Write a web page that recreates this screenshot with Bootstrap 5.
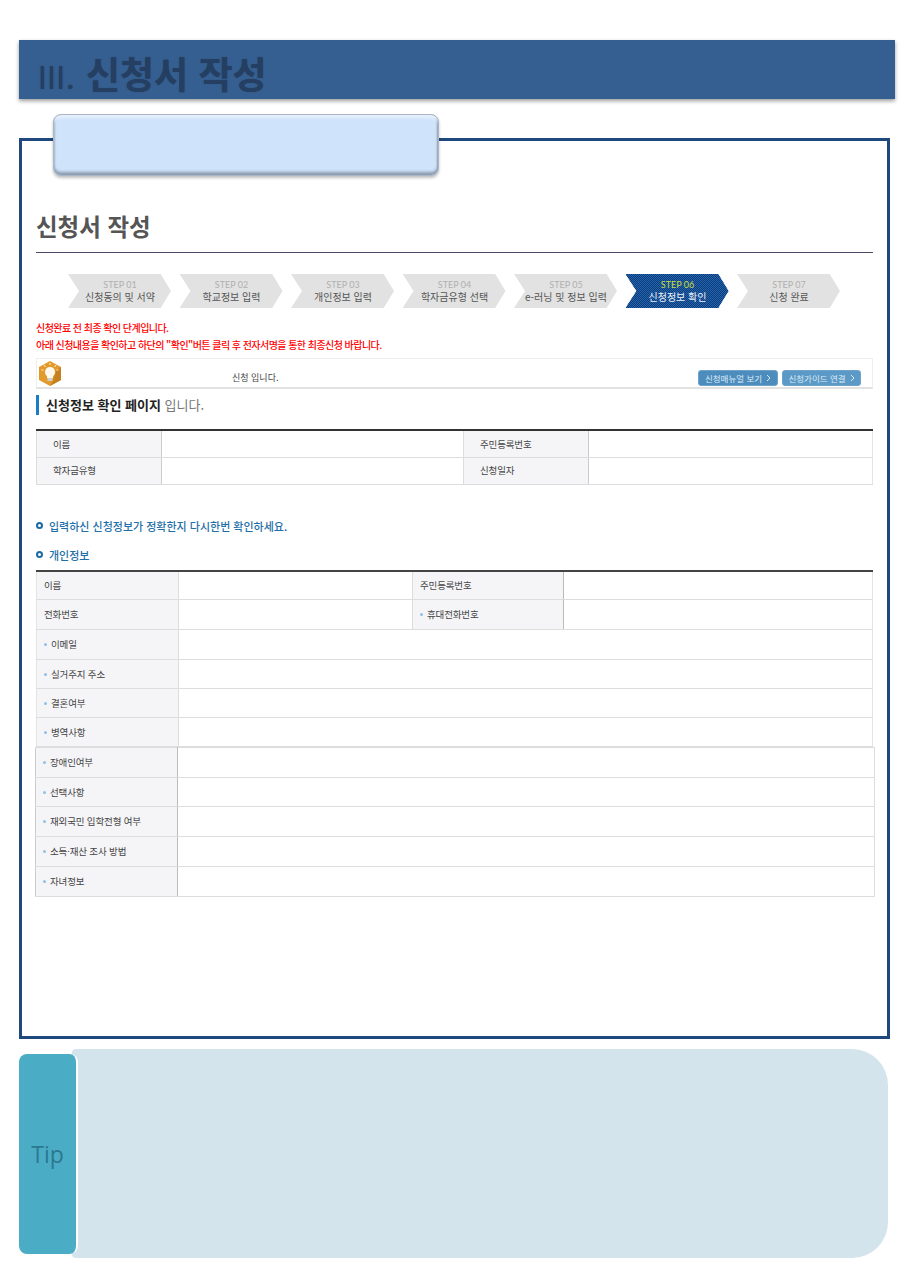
<!DOCTYPE html>
<html lang="ko">
<head>
<meta charset="utf-8">
<title>신청서 작성</title>
<link rel="stylesheet" href="https://cdn.jsdelivr.net/npm/bootstrap@5.3.0/dist/css/bootstrap.min.css">
<style>
html,body{background:#fff;}
body{font-family:"Noto Sans CJK KR","Liberation Sans",sans-serif;width:914px;height:1267px;overflow:hidden;padding:40px 19px 0;color:#333;}
.title-bar{width:876px;height:59px;background:#365f91;box-shadow:0 2px 4px rgba(0,0,0,.4);padding-left:17px;font-size:37px;font-weight:700;color:#243f61;line-height:66px;text-shadow:0 0 1px #243f61;white-space:nowrap;}
.title-bar .num{display:inline-block;width:50px;font-size:31px;font-weight:400;letter-spacing:-1px;}
.frame{position:relative;width:871px;height:901px;margin-top:39px;border:3px solid #1f497d;padding:0 14px;}
.pill{position:absolute;left:31px;top:-27px;width:386px;height:62px;border-radius:8px;background:#cfe3fb;border:1px solid #aab6c8;box-shadow:inset 0 5px 3px -2px #e6f0fb,inset 0 -4px 3px -1px #8c9cb0,inset 2px 0 2px -1px #a9bdd6,inset -2px 0 2px -1px #8c9cb0,0 2px 3px rgba(0,0,0,.25);}
.page-h{margin:0;height:112px;border-bottom:1px solid #4a4a68;padding-top:68px;font-size:23.5px;font-weight:700;line-height:34px;color:#555;}
.frame-in{width:837px;}
.steps{margin:21px 0 0 32px;gap:8.5px;}
.stp{width:103px;height:34px;background:#e2e2e2;clip-path:polygon(0 0,90% 0,100% 50%,90% 100%,0 100%,11px 50%);text-align:center;flex:none;color:#555;font-size:10px;line-height:13px;padding:5px 0 0 1px;white-space:nowrap;}
.stp small{display:block;font-size:9px;line-height:11px;color:#b0b0b0;font-family:"Lato","Liberation Sans",sans-serif;}
.stp.on{background-color:#1e66b8;background-image:conic-gradient(#123a70 25%,transparent 0 50%,#123a70 0 75%,transparent 0);background-size:2px 2px;color:#eef3f9;}
.stp.on small{color:#c7dc3c;}
.warn{margin:11px 0 0;color:#f00;font-size:10px;letter-spacing:-.55px;line-height:17px;font-weight:500;}
.notice{height:31px;margin-top:5px;border:1px solid #eee;border-bottom:2px solid #e2e2e2;position:relative;font-size:9px;color:#444;padding:11px 11px 0 0;}
.notice .hex{position:absolute;left:2px;top:2px;}
.notice .msg{position:absolute;left:195px;top:11px;line-height:15px;}
.blue-btn{height:16px;background:#4d8dbd;border:1px solid #6fa3c9;border-radius:3px;color:#dcebf6;font-size:8.5px;line-height:14px;white-space:nowrap;padding:0;display:flex;align-items:center;justify-content:center;gap:4px;}
.b1{width:80px;}
.b2{width:79px;background:#5b99c6;}
.sec-h{margin:6px 0 0;height:20px;border-left:3px solid #1b7dc7;padding-left:7px;font-size:13px;line-height:20px;font-weight:700;color:#222;}
.sec-h span{font-weight:400;color:#777;}
.tbl{table-layout:fixed;border-collapse:collapse;margin:0;font-size:9.5px;letter-spacing:-.15px;color:#444;}
.tbl th{background:#f5f5f8;font-weight:400;}
.tbl th,.tbl td{border:1px solid #ddd;padding:0;}
.tbl1{width:837px;margin-top:14px;border-top:2px solid #333;}
.tbl1 th{padding-left:16px;border-right-color:#ccc;}
.tbl1 tr{height:27px;}
.tbl1 tr:first-child th,.tbl1 tr:first-child td{border-top:0;}
.tbl1 td{border-left:0;}
.tbl1 th+td+th{border-left:0;}
.tbl1 td:last-child{border-right:1px solid #e4e4e4;}
.tbl1 .c1,.tbl1 .c3{width:125px;}
.tbl1 .c2{width:302px;}
.bul{margin:0;color:#1f6fa8;font-size:11px;line-height:16px;display:flex;align-items:center;gap:6px;font-weight:500;}
.bul i{width:7px;height:7px;border:2px solid #1c6aa3;border-radius:50%;flex:none;}
.bul1{margin-top:33px;}
.bul2{margin-top:13px;margin-bottom:7px;}
.tbl2{width:837px;border-top:2px solid #444;}
.tbl2 th{padding-left:7px;}
.tbl2 th:first-child{border-left:1px solid #e4e4e4;}
.tbl2 td:last-child{border-right:1px solid #e4e4e4;}
.tbl2 .c1{width:142px;}
.tbl2 .c2{width:234px;}
.tbl2 .c3{width:151px;}
.tbl2 th+td+th{border-left:1px solid #bbb;border-right:1px solid #bbb;}
.tbl3{width:840px;margin-left:-1px;}
.tbl3 .c1{width:142px;}
.tbl3 th{padding-left:7px;border-right:1px solid #bbb;border-left:1px solid #ccc;}
.tbl3 td{border-right:1px solid #ddd;}
.tbl3 tr{border-bottom:1px solid #ccc;}
.h29{height:29px;}.h30{height:30px;}
.dot{display:inline-block;width:3px;height:3px;border-radius:50%;background:#8fc1e8;margin-right:4px;vertical-align:2px;}
.tip{position:relative;width:869px;height:209px;margin-top:10px;}
.tip-bg{position:absolute;left:53px;top:0;width:816px;height:209px;background:#d3e4ec;border-radius:4px 36px 36px 4px;}
.tip-tab{position:absolute;left:0;top:5px;width:59px;height:200px;background:#4bacc6;border-right:2px solid #fff;border-radius:8px;display:flex;align-items:center;justify-content:center;font-family:"Open Sans",sans-serif;font-size:23px;color:#2c7890;}
</style>
</head>
<body>
<div class="title-bar"><span class="num">Ⅲ.</span>신청서 작성</div>
<div class="frame">
  <div class="pill"></div>
  <div class="frame-in">
    <h1 class="page-h">신청서 작성</h1>
    <div class="steps d-flex">
      <div class="stp"><small>STEP 01</small>신청동의 및 서약</div>
      <div class="stp"><small>STEP 02</small>학교정보 입력</div>
      <div class="stp"><small>STEP 03</small>개인정보 입력</div>
      <div class="stp"><small>STEP 04</small>학자금유형 선택</div>
      <div class="stp"><small>STEP 05</small>e-러닝 및 정보 입력</div>
      <div class="stp on"><small>STEP 06</small>신청정보 확인</div>
      <div class="stp"><small>STEP 07</small>신청 완료</div>
    </div>
    <p class="warn">신청완료 전 최종 확인 단계입니다.<br>아래 신청내용을 확인하고 하단의 "확인"버튼 클릭 후 전자서명을 통한 최종신청 바랍니다.</p>
    <div class="notice d-flex justify-content-end align-items-start gap-1">
      <svg class="hex" width="22" height="25" viewBox="0 0 22 25"><polygon points="11,0 22,6 22,19 11,25 0,19 0,6" fill="#e39a2c"/><polygon points="11,25 22,19 22,6 17,10 14,20" fill="#c6811f"/><g stroke="#fbeecb" stroke-width="1"><path d="M11 2v2M5 4l1.500 2M17 4l-1.500 2M2.500 9h2M17.500 9h2"/></g><path d="M11 6a5 5 0 0 1 3 9v2H8v-2a5 5 0 0 1 3-9z" fill="#fdf8ec"/><rect x="8.500" y="17" width="5" height="3" fill="#cfcfcf"/></svg>
      <span class="msg">신청 입니다.</span>
      <div class="blue-btn b1">신청매뉴얼 보기<svg width="5" height="8" viewBox="0 0 5 8"><path d="M1 1l3 3-3 3" fill="none" stroke="#dcebf6"/></svg></div>
      <div class="blue-btn b2">신청가이드 연결<svg width="5" height="8" viewBox="0 0 5 8"><path d="M1 1l3 3-3 3" fill="none" stroke="#dcebf6"/></svg></div>
    </div>
    <h2 class="sec-h">신청정보 확인 페이지 <span>입니다.</span></h2>
    <table class="tbl tbl1">
      <colgroup><col class="c1"><col class="c2"><col class="c3"><col></colgroup>
      <tr><th>이름</th><td></td><th>주민등록번호</th><td></td></tr>
      <tr><th>학자금유형</th><td></td><th>신청일자</th><td></td></tr>
    </table>
    <p class="bul bul1"><i></i>입력하신 신청정보가 정확한지 다시한번 확인하세요.</p>
    <p class="bul bul2"><i></i>개인정보</p>
    <table class="tbl tbl2">
      <colgroup><col class="c1"><col class="c2"><col class="c3"><col></colgroup>
      <tr class="h29"><th>이름</th><td></td><th>주민등록번호</th><td></td></tr>
      <tr class="h30"><th>전화번호</th><td></td><th><i class="dot"></i>휴대전화번호</th><td></td></tr>
      <tr class="h30"><th><i class="dot"></i>이메일</th><td colspan="3"></td></tr>
      <tr class="h29"><th><i class="dot"></i>실거주지 주소</th><td colspan="3"></td></tr>
      <tr class="h29"><th><i class="dot"></i>결혼여부</th><td colspan="3"></td></tr>
      <tr class="h29"><th><i class="dot"></i>병역사항</th><td colspan="3"></td></tr>
    </table>
    <table class="tbl tbl3">
      <colgroup><col class="c1"><col></colgroup>
      <tr class="h30"><th><i class="dot"></i>장애인여부</th><td></td></tr>
      <tr class="h29"><th><i class="dot"></i>선택사항</th><td></td></tr>
      <tr class="h30"><th><i class="dot"></i>재외국민 입학전형 여부</th><td></td></tr>
      <tr class="h30"><th><i class="dot"></i>소득·재산 조사 방법</th><td></td></tr>
      <tr class="h30"><th><i class="dot"></i>자녀정보</th><td></td></tr>
    </table>
  </div>
</div>
<div class="tip">
  <div class="tip-bg"></div>
  <div class="tip-tab">Tip</div>
</div>
</body>
</html>
